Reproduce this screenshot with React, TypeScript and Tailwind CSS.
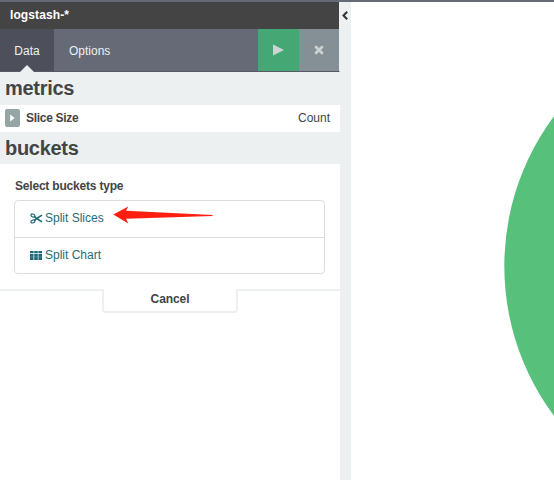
import React from "react";
import { FaTimes } from "react-icons/fa";

function ScissorsIcon() {
  return (
    <svg className="h-[11px] w-[13px] shrink-0" viewBox="0 0 13 11" fill="none" stroke="currentColor">
      <ellipse cx="2.9" cy="2.5" rx="2" ry="1.4" transform="rotate(22 2.9 2.5)" strokeWidth="1.2" />
      <ellipse cx="2.9" cy="8.5" rx="2" ry="1.4" transform="rotate(-22 2.9 8.5)" strokeWidth="1.2" />
      <path d="M4.6 3.6L6.6 5.5 12 8.9M4.6 7.4L6.6 5.5 12 2.1" strokeWidth="1.7" />
    </svg>
  );
}

function TableIcon() {
  return (
    <svg className="h-[9px] w-[12px] shrink-0" viewBox="0 0 12 9" fill="currentColor">
      <path d="M0 0h3.6v2H0zM4.2 0h3.6v2H4.2zM8.4 0H12v2H8.4zM0 2.7h3.5V9H0zM4.2 2.7h3.6V9H4.2zM8.4 2.7H12V9H8.4z" />
      <path d="M0 5.8h12" stroke="white" strokeOpacity=".35" strokeWidth=".5" />
    </svg>
  );
}

function SectionTitle({ children }: { children: React.ReactNode }) {
  return <h2 className="bg-[#ecf0f1] pl-[5px] text-[20px] leading-[32px] font-bold tracking-[-0.3px] text-[#444]">{children}</h2>;
}

function Sidebar() {
  return (
    <aside className="w-[340px] shrink-0 bg-white">
      <div className="h-[27px] border-r border-[#ecf0f1] bg-[#444] pl-[10px] text-[12px] leading-[26px] font-bold tracking-[0.1px] text-white">logstash-*</div>
      <nav className="flex h-[43px] border-r border-b border-r-[#ecf0f1] border-b-[#565963] bg-[#656a76] text-[12px] leading-[44px] text-[#ecf0f1]">
        <div className="relative w-[54px] bg-[#4d505b] text-center">
          Data
          <span className="absolute -bottom-px left-[20px] h-0 w-0 border-x-[7px] border-b-[7px] border-x-transparent border-b-[#ecf0f1]" />
        </div>
        <div className="flex-1 pl-[15px]">Options</div>
        <div className="flex w-[41px] items-center justify-center bg-[#45a774]">
          <svg className="h-[12px] w-[11px]" viewBox="0 0 11 12" fill="#d0d3d3">
            <path d="M0 .5L11 6 0 11.5z" />
          </svg>
        </div>
        <div className="flex w-[40px] items-center justify-center bg-[#849095] text-[#d0d3d3]">
          <FaTimes size={12} strokeWidth={25} stroke="currentColor" />
        </div>
      </nav>
      <div className="bg-[#ecf0f1] pb-px">
        <SectionTitle>metrics</SectionTitle>
      </div>
      <div className="flex h-[27px] items-center pr-[10px] pb-px pl-[5px] text-[12px] text-[#444]">
        <div className="mr-[6px] flex h-[18px] w-[15px] items-center justify-center rounded-[2px] bg-[#95a5a6]">
          <svg className="h-[8px] w-[5px]" viewBox="0 0 5 8" fill="white">
            <path d="M.2 .4l4.4 3.6L.2 7.6z" />
          </svg>
        </div>
        <span className="flex-1 font-bold tracking-[-0.3px]">Slice Size</span>
        <span>Count</span>
      </div>
      <SectionTitle>buckets</SectionTitle>
      <div className="h-[125px] px-[15px] pt-[13px]">
        <div className="h-[23px] text-[12px] leading-[18px] font-bold tracking-[-0.2px] text-[#444]">Select buckets type</div>
        <div className="-ml-px h-[74px] w-[311px] rounded-[4px] border border-[#ddd] text-[12px] text-[#1f6b7a]">
          <div className="flex h-[37px] items-center gap-[2px] border-b border-[#ddd] pb-[2px] pl-[15px]">
            <ScissorsIcon />
            <span>Split Slices</span>
          </div>
          <div className="flex h-[35px] items-center gap-[3px] pb-px pl-[15px]">
            <TableIcon />
            <span>Split Chart</span>
          </div>
        </div>
      </div>
      <div className="flex h-[24px]">
        <div className="w-[102px] border-t-2 border-[#ecf0f1]" />
        <div className="w-[136px] rounded-b-[4px] border-x-2 border-b-2 border-[#ecf0f1] text-center text-[12px] leading-[21px] font-bold tracking-[-0.1px] text-[#444]">Cancel</div>
        <div className="flex-1 border-t-2 border-[#ecf0f1]" />
      </div>
    </aside>
  );
}

export default function App() {
  return (
    <div className="relative flex h-[480px] w-[554px] flex-col overflow-hidden bg-white font-['Liberation_Sans',Arial,sans-serif]">
      <div className="h-[2px] shrink-0 bg-[#656a76]" />
      <div className="flex flex-1">
        <Sidebar />
        <div className="w-[11px] shrink-0 bg-[#ecf0f1] pt-[9px] pl-[2px]">
          <svg className="h-[9px] w-[6px]" viewBox="0 0 6 9" fill="none" stroke="#333" strokeWidth="2">
            <path d="M5.2 .8L1.5 4.5l3.7 3.7" />
          </svg>
        </div>
        <svg className="h-[478px] w-[203px]" viewBox="351 2 203 478">
          <circle cx="755" cy="266" r="250.7" fill="#57c17b" />
        </svg>
      </div>
      <svg className="absolute top-[205px] left-[112px] h-[20px] w-[102px]" viewBox="112 205 102 20" fill="#ff1e0f">
        <path d="M113.3 214.6L128.3 206.4 126 210.8 212.5 215 212.5 216 126 218.8 128.3 223.4z" />
      </svg>
    </div>
  );
}
